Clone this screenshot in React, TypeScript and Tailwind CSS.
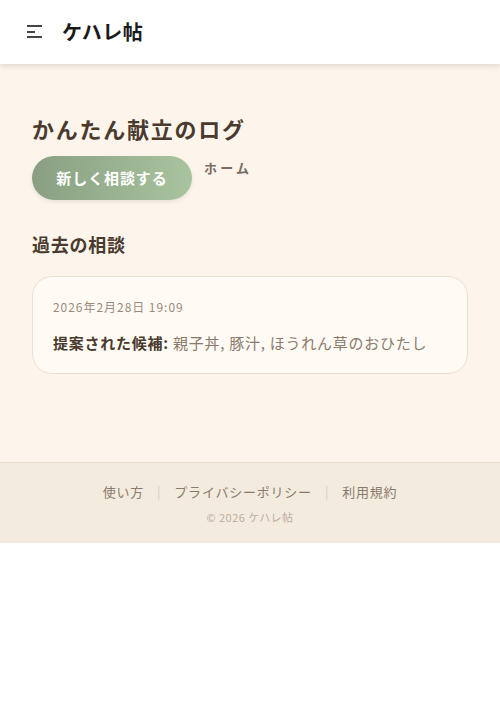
const jp = "font-['Noto_Sans_CJK_JP','Noto_Sans',sans-serif]";

const MenuIcon = () => (
  <svg width="16" height="14" viewBox="0 0 16 14" className="block">
    <rect x="0" y="0" width="15" height="2" fill="#444" />
    <rect x="0" y="6" width="8" height="2" fill="#444" />
    <rect x="0" y="11" width="15" height="2" fill="#444" />
  </svg>
);

export default function App() {
  return (
    <div className={`${jp} w-[500px] bg-white`}>
      {/* Header */}
      <header className="relative z-10 h-16 bg-white shadow-[0_2px_6px_rgba(0,0,0,0.12)] flex items-center px-[27px] gap-[19px]">
        <button aria-label="menu" className="p-0">
          <MenuIcon />
        </button>
        <h1 className="text-[20px] font-bold text-[#1a1a1a] tracking-wide">ケハレ帖</h1>
      </header>

      {/* Main */}
      <main className="bg-[#fdf5ec] px-8 pt-[48px] pb-[88px]">
        <h2 className="text-[22px] font-bold text-[#4a3a2e] leading-8 tracking-[0.08em]">かんたん献立のログ</h2>
        <div className="flex items-start gap-3 mt-3">
          <button className="h-11 w-40 rounded-full bg-gradient-to-r from-[#8a9f82] to-[#a8c49e] text-white font-bold text-[15px] tracking-[0.06em] shadow-[0_2px_4px_rgba(0,0,0,0.08)]">
            新しく相談する
          </button>
          <span className="text-[13px] text-[#7a6a5c] font-bold tracking-[0.25em] mt-[2px]">ホーム</span>
        </div>

        <h3 className="text-[18px] font-bold text-[#4a3a2e] mt-[30px] leading-7 tracking-[0.04em]">過去の相談</h3>
        <div className="mt-[18px] rounded-[20px] border border-[#ebdfd0] bg-[#fffaf4] px-5 pt-[20px] pb-[18px]">
          <p className="text-[12px] text-[#9a8a7c] leading-5 tracking-[0.08em]">2026年2月28日 19:09</p>
          <p className="text-[15px] mt-[14px] leading-6 tracking-[0.05em]">
            <span className="font-bold text-[#4a3a2e]">提案された候補:</span>{" "}
            <span className="text-[#8a7a6c]">親子丼, 豚汁, ほうれん草のおひたし</span>
          </p>
        </div>
      </main>

      {/* Footer */}
      <footer className="bg-[#f4ebdf] border-t border-[#e8dac8] h-[81px] flex flex-col items-center pt-[19px]">
        <nav className="flex items-center gap-[13px] text-[13px] text-[#8a7a6c] leading-5 tracking-[0.06em]">
          <span>使い方</span>
          <span className="text-[#d8ccbe]">|</span>
          <span>プライバシーポリシー</span>
          <span className="text-[#d8ccbe]">|</span>
          <span>利用規約</span>
        </nav>
        <p className="text-[11px] text-[#bcae9f] mt-[7px] tracking-[0.04em]">© 2026 ケハレ帖</p>
      </footer>
    </div>
  );
}
